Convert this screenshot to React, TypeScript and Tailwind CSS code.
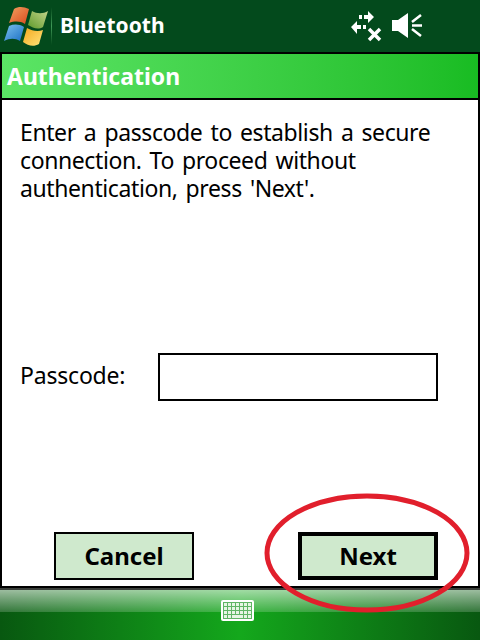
const tahoma = { fontFamily: '"Noto Sans", sans-serif' };

function WindowsLogo() {
  return (
    <svg width="44" height="40" viewBox="0 0 44 40">
      <defs>
        <linearGradient id="red" x1="0" y1="0" x2="1" y2="1">
          <stop offset="0" stopColor="#f0a060" />
          <stop offset="1" stopColor="#dc4a1e" />
        </linearGradient>
        <linearGradient id="grn" x1="1" y1="0" x2="0" y2="1">
          <stop offset="0" stopColor="#c3d48a" />
          <stop offset="1" stopColor="#5f9a2c" />
        </linearGradient>
        <linearGradient id="blu" x1="0" y1="0" x2="1" y2="1">
          <stop offset="0" stopColor="#7cc0ee" />
          <stop offset="1" stopColor="#1a6fc4" />
        </linearGradient>
        <linearGradient id="ylw" x1="1" y1="1" x2="0" y2="0">
          <stop offset="0" stopColor="#ffe27a" />
          <stop offset="1" stopColor="#f4a91e" />
        </linearGradient>
      </defs>
      <path d="M10 3 C15 0 20 1 25 3 L21 18 C16 15 11 15 5 17 Z" fill="url(#red)" />
      <path d="M28 5 C33 8 39 8 44 5 L39 21 C34 24 29 22 24 19 Z" fill="url(#grn)" />
      <path d="M5 20 C10 18 15 18 20 21 L16 35 C11 32 6 32 0 35 Z" fill="url(#blu)" />
      <path d="M23 22 C28 25 34 26 39 24 L35 38 C30 41 24 40 19 36 Z" fill="url(#ylw)" />
    </svg>
  );
}

function ConnectivityIcon() {
  return (
    <svg width="32" height="31" viewBox="0 0 32 31" fill="white">
      <path d="M8 4h3v4H8zM13 4h4V0l6 6-6 6V8h-4z" />
      <path d="M0 16l6-6v4h4v4H6v5zM12 14h3v4h-3z" />
      <path d="M18 18l11 11M29 18L18 29" stroke="white" strokeWidth="3.5" />
    </svg>
  );
}

function SpeakerIcon() {
  return (
    <svg width="30" height="26" viewBox="0 0 30 26" fill="white">
      <path d="M0 7h6L16 0v25L6 18H0z" />
      <path d="M20 9l9-7M20 12.5h10M20 16l9 7" stroke="white" strokeWidth="2.5" />
    </svg>
  );
}

function KeyboardIcon() {
  const rows = [0, 1, 2];
  const keys = [0, 1, 2, 3, 4, 5, 6];
  return (
    <svg width="33" height="21" viewBox="0 0 33 21">
      <rect width="33" height="21" rx="2" fill="white" />
      <rect x="2" y="2" width="29" height="17" fill="#5fb565" />
      {rows.map((r) =>
        keys.map((k) => (
          <rect key={`${r}-${k}`} x={3 + k * 4} y={3 + r * 4} width="3" height="3" fill="#e6f5e4" />
        )),
      )}
      <rect x="3" y="15" width="3" height="3" fill="#e6f5e4" />
      <rect x="7" y="15" width="3" height="3" fill="#e6f5e4" />
      <rect x="11" y="15" width="11" height="3" fill="#e6f5e4" />
      <rect x="23" y="15" width="3" height="3" fill="#e6f5e4" />
      <rect x="27" y="15" width="3" height="3" fill="#e6f5e4" />
    </svg>
  );
}

function DialogButton({ label, isDefault }: { label: string; isDefault?: boolean }) {
  return (
    <button
      className={`flex h-[48px] w-[140px] items-center justify-center border-black bg-[#cfe9cd] text-[24px] font-bold leading-none text-black ${
        isDefault ? "border-[4px]" : "border-[2px]"
      }`}
    >
      {label}
    </button>
  );
}

export default function App() {
  return (
    <div className="relative flex h-[640px] w-[480px] flex-col overflow-hidden bg-black" style={tahoma}>
      <header className="flex h-[52px] items-center bg-[#034a1c]">
        <div className="ml-[4px] flex w-[44px] items-center">
          <WindowsLogo />
        </div>
        <div className="ml-[3px] h-[38px] w-[1px] bg-gradient-to-b from-[#034a1c] via-[#3f9a58] to-[#034a1c]" />
        <span className="ml-[8px] text-[21px] font-bold text-white">Bluetooth</span>
        <div className="ml-auto mr-[58px] flex items-center gap-[9px]">
          <ConnectivityIcon />
          <SpeakerIcon />
        </div>
      </header>

      <main className="mt-[2px] flex h-[532px] flex-col px-[2px]">
        <div className="flex h-[44px] items-center bg-gradient-to-r from-[#5be565] to-[#18bc22] pl-[5px]">
          <h1 className="text-[23px] font-bold text-white">Authentication</h1>
        </div>
        <div className="mt-[2px] flex flex-1 flex-col bg-white">
          <p className="ml-[18px] mt-[18px] w-[440px] text-[23px] leading-[28px] tracking-[-0.4px] text-black [word-spacing:2.5px]">
            Enter a passcode to establish a secure connection. To proceed without authentication, press 'Next'.
          </p>
          <div className="ml-[18px] mt-[151px] flex items-center">
            <span className="mb-[4px] w-[138px] text-[23px] tracking-[-0.2px] text-black">Passcode:</span>
            <div className="h-[48px] w-[280px] border-[2px] border-black bg-white" />
          </div>
          <div className="mt-auto mb-[6px] ml-[52px] flex gap-[104px]">
            <DialogButton label="Cancel" />
            <DialogButton label="Next" isDefault />
          </div>
        </div>
      </main>

      <footer className="relative mt-[2px] flex h-[52px] flex-col bg-[linear-gradient(to_right,#085810,#14a81c_50%,#085810)]">
        <div className="h-[2px] bg-[#3a3f3a]" />
        <div className="h-[22px] bg-[linear-gradient(to_bottom,rgba(255,255,255,0.6),rgba(255,255,255,0.18))]" />
        <div className="absolute left-[221px] top-[12px]">
          <KeyboardIcon />
        </div>
      </footer>

      <svg className="absolute left-[262px] top-[490px]" width="212" height="126" viewBox="0 0 212 126" fill="none">
        <ellipse cx="105" cy="63" rx="100" ry="57" stroke="#e11f2c" strokeWidth="5" />
      </svg>
    </div>
  );
}
